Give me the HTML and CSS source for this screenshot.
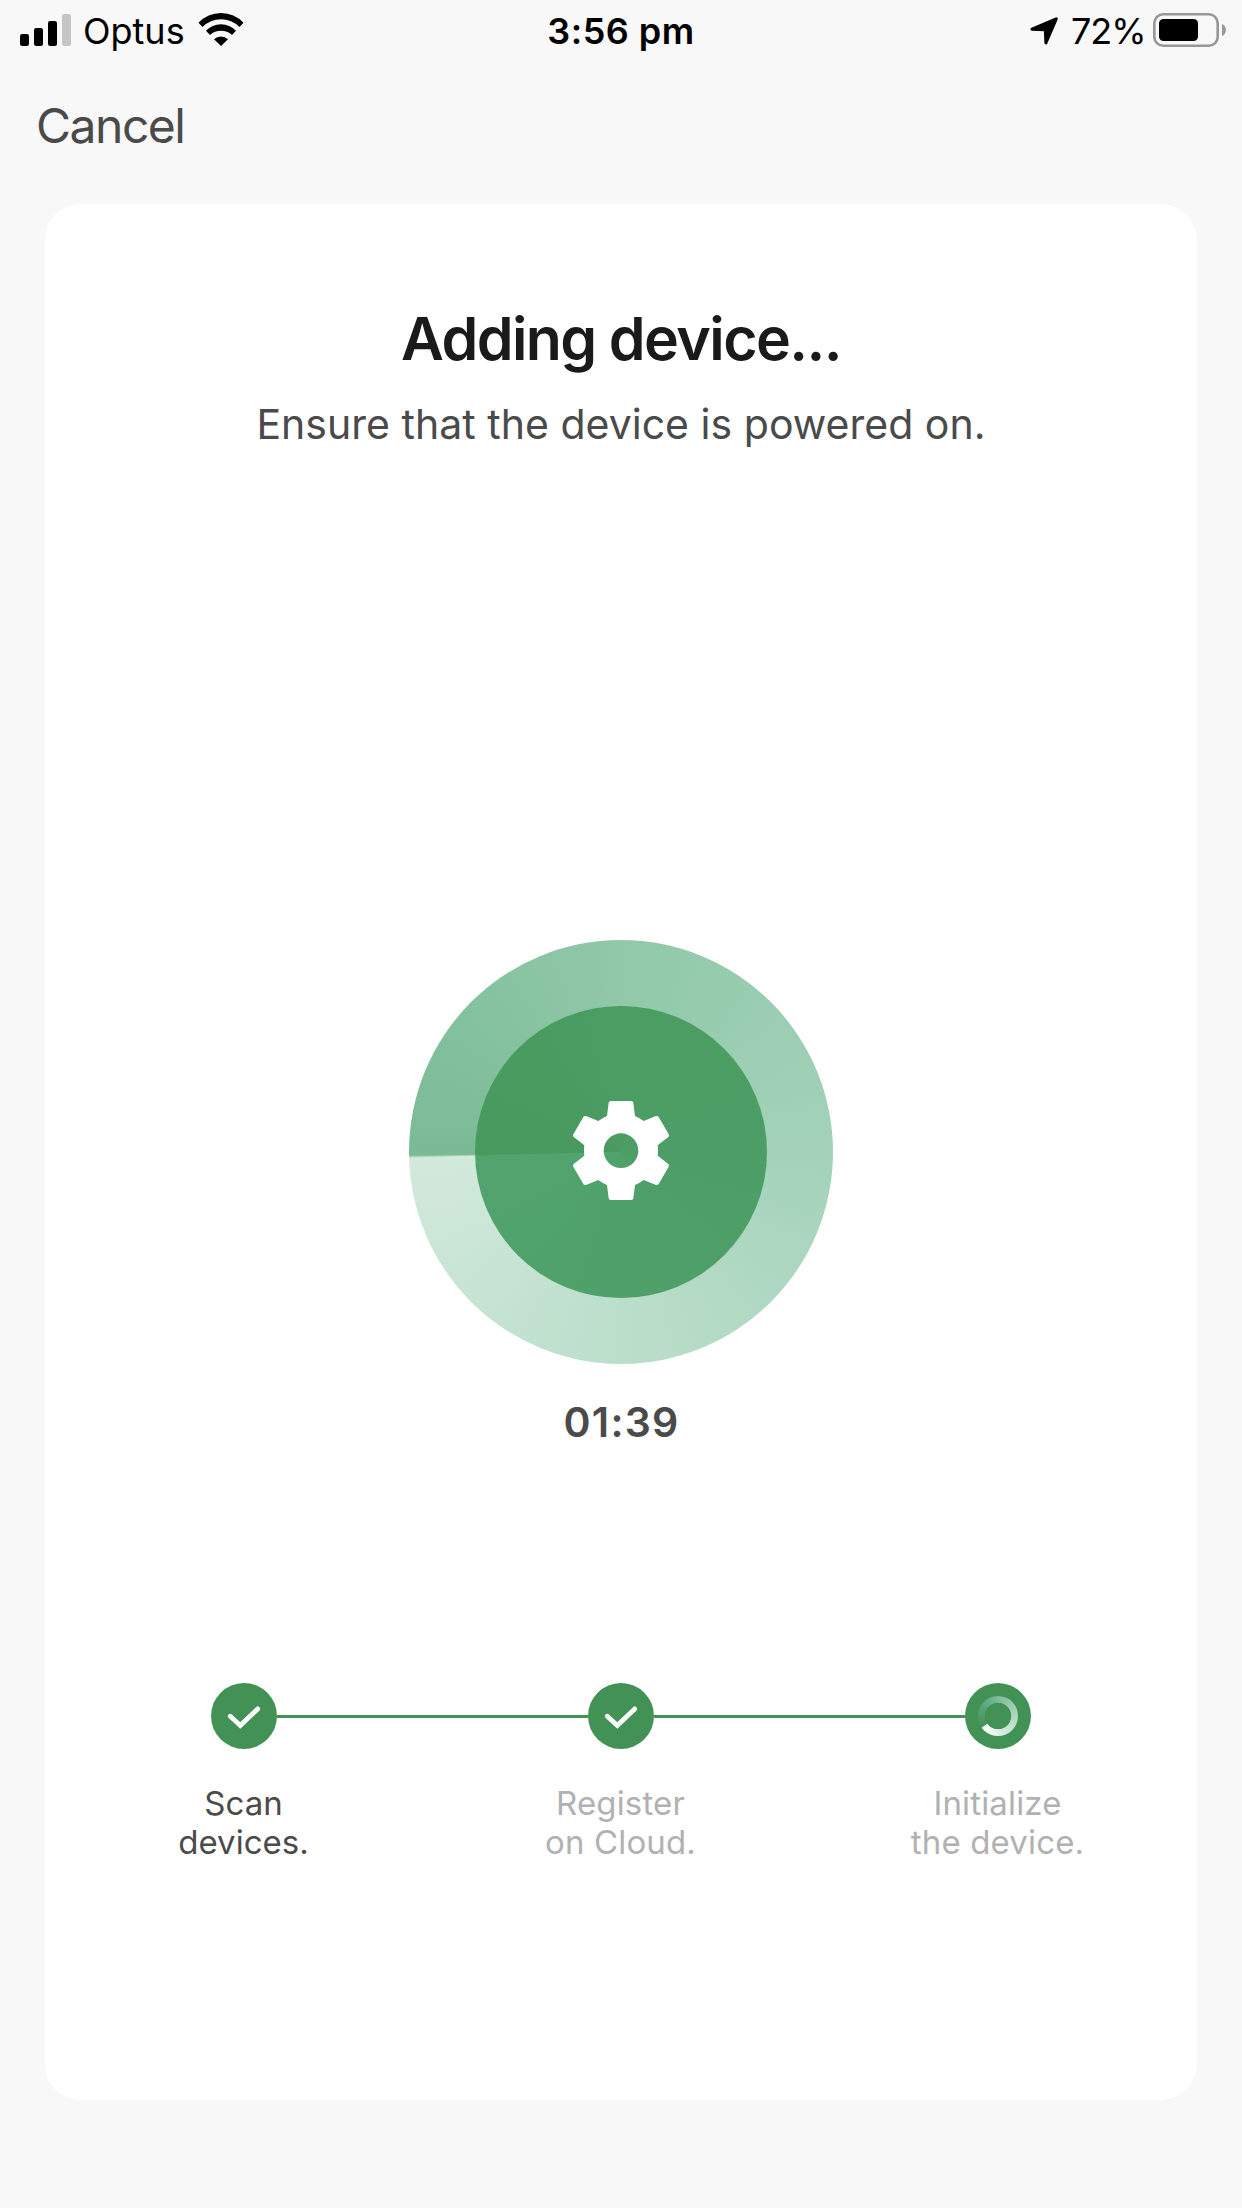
FILE: index.html
```
<!DOCTYPE html>
<html lang="en">
<head>
<meta charset="utf-8">
<title>Adding device</title>
<link rel="stylesheet" href="styles.css">
</head>
<body>
<header class="status-bar">
  <div class="status-left">
    <svg class="signal" width="51" height="32" viewBox="0 0 51 32">
      <rect x="0" y="20" width="9" height="12" rx="2.2"/>
      <rect x="14" y="14" width="9" height="18" rx="2.2"/>
      <rect x="28" y="7" width="9" height="25" rx="2.2"/>
      <rect x="42" y="0" width="9" height="32" rx="2.2" fill="#c5c5c5"/>
    </svg>
    <span class="carrier">Optus</span>
    <svg class="wifi" width="46" height="33" viewBox="0 0 46 33">
      <path d="M.5 9.7A31 31 0 0 1 45.5 9.7L41.5 14A26 26 0 0 0 4.5 14Z"/>
      <path d="M8 17.7A20.5 20.5 0 0 1 38 17.7L34 22A16.5 16.5 0 0 0 12 22Z"/>
      <path d="M16 26.3A10 10 0 0 1 30 26.3L23 33Z"/>
    </svg>
  </div>
  <div class="time">3:56 pm</div>
  <div class="status-right">
    <svg class="location" width="29" height="28" viewBox="0 0 29 28">
      <path d="M26.3 1.8L2 12.2L15.3 12.7L15.9 26Z" stroke="#000" stroke-width="3" stroke-linejoin="round"/>
    </svg>
    <span class="percent">72%</span>
    <svg class="battery" width="73" height="34" viewBox="0 0 73 34">
      <rect x="1.3" y="1.3" width="63.4" height="31.4" rx="9" fill="none" stroke="#979797" stroke-width="2.6"/>
      <rect x="6" y="6" width="39" height="22" rx="4.5"/>
      <path d="M69 11C74.3 13 74.3 21 69 23Z" fill="#979797"/>
    </svg>
  </div>
</header>
<nav class="nav"><span class="cancel">Cancel</span></nav>
<main class="card">
  <h1 class="title">Adding device...</h1>
  <p class="subtitle">Ensure that the device is powered on.</p>
  <div class="dial">
    <div class="dial-core">
      <svg class="gear" width="96" height="99" viewBox="99 93 288 297">
        <path fill="#fff" fill-rule="evenodd" d="M212 93H274Q279 93 280 98L285 138Q299 144 311 153L348 138Q353 137 356 141L386 193Q388 197 385 201L353 226Q355 241 353 257L385 282Q388 286 386 290L356 342Q353 346 348 345L311 330Q299 339 285 345L280 385Q279 390 274 390H212Q207 390 206 385L201 345Q187 339 175 330L138 345Q133 346 130 342L100 290Q98 286 101 282L133 257Q131 241 133 226L101 201Q98 197 100 193L130 141Q133 137 138 138L175 153Q187 144 201 138L206 98Q207 93 212 93ZM243 190A52 52 0 1 0 243 294A52 52 0 1 0 243 190Z"/>
      </svg>
    </div>
  </div>
  <div class="timer">01:39</div>
  <div class="track">
    <span class="dot"><svg width="66" height="66" viewBox="0 0 66 66"><path class="tick" d="M19.3 33.2L29.3 42.5L46.7 25.9"/></svg></span>
    <span class="line"></span>
    <span class="dot"><svg width="66" height="66" viewBox="0 0 66 66"><path class="tick" d="M19.3 33.2L29.3 42.5L46.7 25.9"/></svg></span>
    <span class="line"></span>
    <span class="dot"><span class="spinner"></span></span>
  </div>
  <div class="labels">
    <div class="label label-active">Scan<br>devices.</div>
    <div class="label">Register<br>on Cloud.</div>
    <div class="label">Initialize<br>the device.</div>
  </div>
</main>
</body>
</html>
```
FILE: styles.css
```
* { box-sizing: border-box; }
body {
  margin: 0;
  height: 2208px;
  background: #f8f8f8;
  font-family: Inter, "Liberation Sans", sans-serif;
  color: #4a4a4a;
}
svg { display: block; flex: none; }

.status-bar {
  display: grid;
  grid-template-columns: 1fr auto 1fr;
  height: 62px;
  padding: 0 16px 0 20px;
  font-size: 36px;
  line-height: 62px;
  color: #000;
}
.status-left, .status-right { display: flex; align-items: flex-start; }
.status-right { justify-content: flex-end; }
.signal { margin: 14px 12px 0 0; }
.carrier { width: 115px; }
.wifi { margin-top: 13px; }
.time { font-weight: 600; letter-spacing: .5px; padding-right: 4px; }
.location { margin: 17px 12px 0 0; }
.percent { width: 82px; letter-spacing: -1px; }
.battery { margin-top: 13px; }

.nav { height: 142px; padding-left: 36px; font-size: 48px; line-height: 127px; letter-spacing: -1.5px; }

.card {
  height: 1896px;
  margin: 0 45px;
  padding-top: 98px;
  border-radius: 36px;
  background: #fff;
  text-align: center;
}
.title { margin: 0; font-size: 59px; font-weight: 600; line-height: 73px; letter-spacing: -1.58px; color: #1a1a1a; }
.subtitle { margin: 24px 0 0; font-size: 41px; line-height: 50px; letter-spacing: .02px; }

.dial {
  display: flex;
  align-items: center;
  justify-content: center;
  width: 424px;
  height: 424px;
  margin: 491px auto 0;
  border-radius: 50%;
  background: conic-gradient(from 269.1deg, #7abb95 0, #90c8a9 25%, #a3d2b9 50%, #bbdecb 75%, #d2e9dc 99.8%, #7abb95 100%);
}
.dial-core {
  display: flex;
  justify-content: center;
  width: 292px;
  height: 292px;
  padding-top: 95px;
  border-radius: 50%;
  background: conic-gradient(from 269.1deg, #48995e 0, #4b9d63 25%, #4c9e66 50%, #4fa169 75%, #52a36d 99.8%, #48995e 100%);
}
.timer { margin-top: 33px; padding-left: 1px; font-size: 41px; font-weight: 600; line-height: 50px; letter-spacing: 1.24px; }

.track { display: flex; align-items: center; margin-top: 236px; padding: 0 166px; }
.dot {
  display: flex;
  align-items: center;
  justify-content: center;
  flex: none;
  width: 66px;
  height: 66px;
  border-radius: 50%;
  background: #439255;
}
.line { flex: 1; height: 3px; margin-top: 1px; background: #439255; }
.tick { fill: none; stroke: #fff; stroke-width: 4.8; stroke-linecap: round; }
.spinner {
  width: 40px;
  height: 40px;
  border-radius: 50%;
  background:
    radial-gradient(circle, #439255 12.8px, transparent 13.6px),
    conic-gradient(from 236deg, #439255 0, #58a87a 20%, #82bd9b 36%, #a7d2b9 55%, #d0e7d9 76%, #fff 99%, #439255 100%);
}
.labels { display: grid; grid-template-columns: repeat(3, 377px); justify-content: center; margin-top: 35px; }
.label { padding-right: 1px; font-size: 33px; line-height: 39px; letter-spacing: .15px; color: #b1b1b1; }
.label-active { color: #4a4a4a; letter-spacing: 0; }
```
